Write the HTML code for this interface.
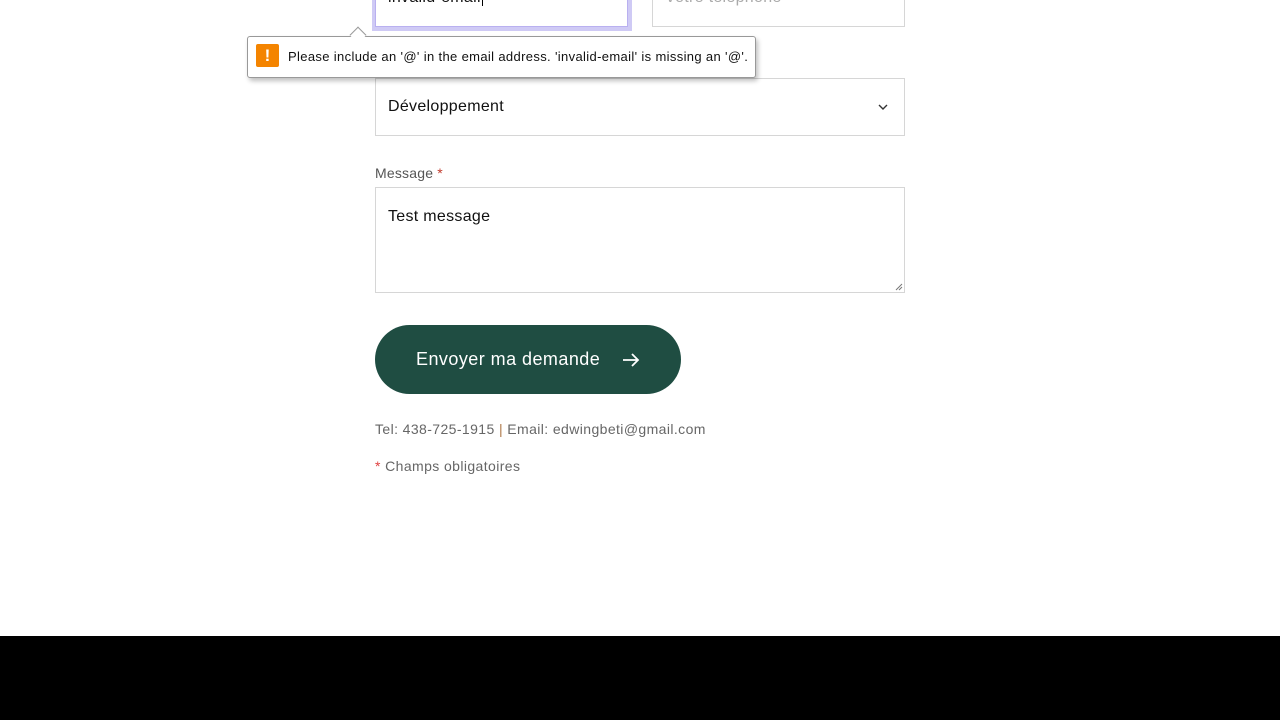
<!DOCTYPE html>
<html><head><meta charset="utf-8"><style>
*{box-sizing:border-box;margin:0;padding:0}
body{width:1280px;height:720px;background:#fff;position:relative;overflow:hidden;font-family:"Liberation Sans",sans-serif}
.abs{position:absolute}
.box{position:absolute;border:1px solid #d6d6d6;background:#fff}
.foot{position:absolute;left:0;top:636px;width:1280px;height:84px;background:#000}
</style></head><body>
<div class="abs" style="left:372px;top:-10px;width:260px;height:41px;background:#cfcaf5"></div>
<div class="abs" style="left:375px;top:-10px;width:253px;height:37px;background:#fff;border:1px solid #b9b0f0"></div>
<div class="abs" style="left:388px;top:-11px;font-size:16px;color:#111;letter-spacing:0.3px">invalid-email<span style="border-left:1px solid #000;margin-left:1px"></span></div>
<div class="box" style="left:652px;top:-10px;width:253px;height:37px"></div>
<div class="abs" style="left:665px;top:-11px;font-size:16px;color:#aaa;letter-spacing:0.3px">Votre téléphone</div>

<div class="box" style="left:375px;top:78px;width:530px;height:58px"></div>
<div class="abs" style="left:388px;top:98px;font-size:16px;color:#111;letter-spacing:0.3px">Développement</div>
<svg class="abs" style="left:877px;top:101px" width="12" height="12" viewBox="0 0 12 12"><path d="M2 4l4 4 4-4" fill="none" stroke="#333" stroke-width="1.4"/></svg>

<div class="abs" style="left:247px;top:36px;width:509px;height:42px;background:#fff;border:1px solid #999;border-radius:3px;box-shadow:2px 3px 5px rgba(0,0,0,.25)"></div>
<div class="abs" style="left:352px;top:29px;width:12px;height:12px;background:#fff;border-left:1px solid #999;border-top:1px solid #999;transform:rotate(45deg)"></div>
<div class="abs" style="left:256px;top:44px;width:23px;height:23px;background:#f48400;border-radius:2px;color:#fff;font-weight:bold;font-size:17px;text-align:center;line-height:23px">!</div>
<div class="abs" style="left:288px;top:49px;font-size:13px;color:#111;letter-spacing:0.35px">Please include an '@' in the email address. 'invalid-email' is missing an '@'.</div>

<div class="abs" style="left:375px;top:165px;font-size:14px;color:#555;letter-spacing:0.2px">Message <span style="color:#c0392b">*</span></div>
<div class="box" style="left:375px;top:187px;width:530px;height:106px"></div>
<svg class="abs" style="left:895px;top:283px" width="8" height="8" viewBox="0 0 8 8"><path d="M7 1L1 7M7 4L4 7" stroke="#777" stroke-width="1"/></svg>
<div class="abs" style="left:388px;top:208px;font-size:16px;color:#111;letter-spacing:0.3px">Test message</div>

<div class="abs" style="left:375px;top:325px;width:306px;height:69px;background:#1f4d42;border-radius:35px"></div>
<div class="abs" style="left:416px;top:349px;font-size:18px;color:#fff;letter-spacing:0.45px">Envoyer ma demande</div>
<svg class="abs" style="left:621px;top:351px" width="20" height="18" viewBox="0 0 20 18"><path d="M2 9h15M11 3l6 6-6 6" fill="none" stroke="#fff" stroke-width="1.8"/></svg>

<div class="abs" style="left:375px;top:421px;font-size:14px;color:#666;letter-spacing:0.4px">Tel: 438-725-1915 <span style="color:#b07a4a">|</span> Email: edwingbeti@gmail.com</div>
<div class="abs" style="left:375px;top:458px;font-size:14px;color:#666;letter-spacing:0.4px"><span style="color:#e04040">*</span> Champs obligatoires</div>
<div class="foot"></div>
</body></html>
